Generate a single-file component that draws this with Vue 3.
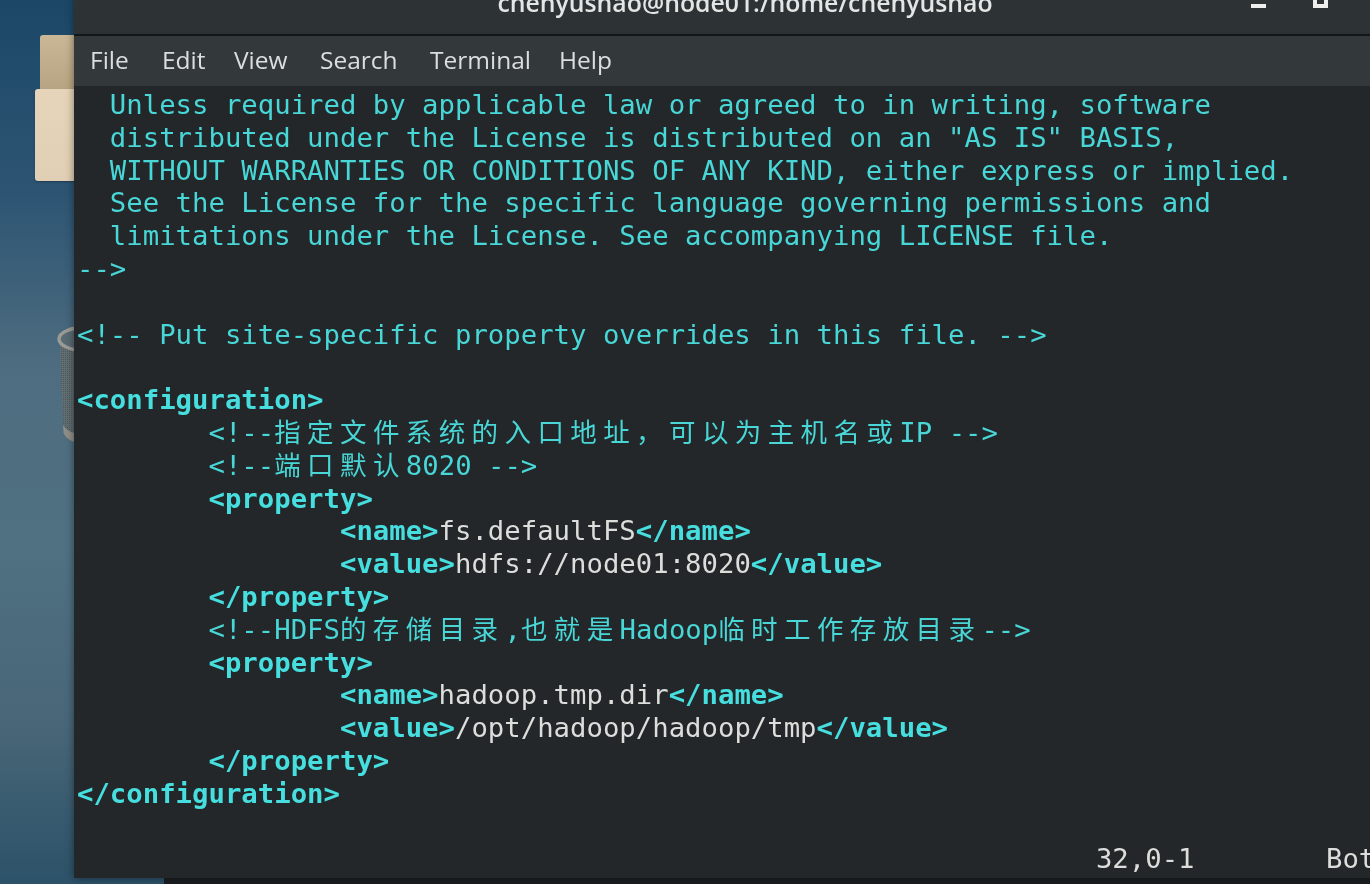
<script setup>
const c = 'c', t = 't', p = 'p'
const raw = [
  [[c, '  Unless required by applicable law or agreed to in writing, software']],
  [[c, '  distributed under the License is distributed on an "AS IS" BASIS,']],
  [[c, '  WITHOUT WARRANTIES OR CONDITIONS OF ANY KIND, either express or implied.']],
  [[c, '  See the License for the specific language governing permissions and']],
  [[c, '  limitations under the License. See accompanying LICENSE file.']],
  [[c, '-->']],
  [],
  [[c, '<!-- Put site-specific property overrides in this file. -->']],
  [],
  [[t, '<configuration>']],
  [[c, '        <!--指定文件系统的入口地址，可以为主机名或IP -->']],
  [[c, '        <!--端口默认8020 -->']],
  [[t, '        <property>']],
  [[t, '                <name>'], [p, 'fs.defaultFS'], [t, '</name>']],
  [[t, '                <value>'], [p, 'hdfs://node01:8020'], [t, '</value>']],
  [[t, '        </property>']],
  [[c, '        <!--HDFS的存储目录,也就是Hadoop临时工作存放目录-->']],
  [[t, '        <property>']],
  [[t, '                <name>'], [p, 'hadoop.tmp.dir'], [t, '</name>']],
  [[t, '                <value>'], [p, '/opt/hadoop/hadoop/tmp'], [t, '</value>']],
  [[t, '        </property>']],
  [[t, '</configuration>']],
  [],
  [[p, '                                                              32,0-1        Bot']]
]
const lines = raw.map(segs => segs.flatMap(([cls, text]) =>
  text.split(/([\u3000-\u9fff\uff00-\uffef]+)/).filter(Boolean).map(s => ({
    cls: /[\u3000-\u9fff\uff00-\uffef]/.test(s) ? cls + ' cjk' : cls,
    text: s
  }))
))
const menus = ['File', 'Edit', 'View', 'Search', 'Terminal', 'Help']
</script>

<template>
  <div class="desktop">
    <div class="folder-back"></div>
    <div class="folder-front"></div>
    <svg class="trash" viewBox="0 0 17 118" width="17" height="118" aria-hidden="true">
      <defs>
        <pattern id="mesh" width="2" height="2" patternUnits="userSpaceOnUse">
          <rect width="2" height="2" fill="#616e72" />
          <rect width="1" height="1" fill="#4c585d" />
        </pattern>
      </defs>
      <path d="M2.5 20 L6.5 108 Q9 114 17 117 L17 20 Z" fill="url(#mesh)" />
      <ellipse cx="30" cy="14" rx="28" ry="12" fill="#586a74" stroke="#9b9b96" stroke-width="3.5" />
      <path d="M6 100 L6.5 108 Q9 114 17 117 L17 108 Q10 106 6 100 Z" fill="#8f8e88" />
    </svg>
    <div class="bottom-strip"></div>

    <div class="window">
      <header class="titlebar">
        <span class="title">chenyushao@node01:/home/chenyushao</span>
        <span class="btn-min"></span>
        <span class="btn-max"></span>
      </header>
      <nav class="menubar">
        <span v-for="m in menus" :key="m" class="menu">{{ m }}</span>
      </nav>
      <div class="terminal">
        <div v-for="(line, i) in lines" :key="i" class="line"><span v-for="(s, j) in line" :key="j" :class="s.cls">{{ s.text }}</span></div>
      </div>
    </div>
  </div>
</template>

<style>
html, body { margin: 0; overflow: hidden; background: #2c5068; }
</style>

<style scoped>
.desktop {
  position: relative;
  width: 1370px;
  height: 884px;
  overflow: hidden;
  background:
    linear-gradient(180deg, #1c4767 0%, #2d5573 22%, #4f6d80 42%, #4f7182 62%, #486677 82%, #2c5269 100%);
}
.folder-back {
  position: absolute;
  left: 40px;
  top: 35px;
  width: 40px;
  height: 60px;
  border-radius: 3px 0 0 0;
  background: linear-gradient(180deg, #c9b796, #b5a280);
}
.folder-front {
  position: absolute;
  left: 35px;
  top: 89px;
  width: 45px;
  height: 92px;
  border-radius: 3px;
  background: linear-gradient(180deg, #e6d5ba, #e0cfb4);
  box-shadow: 0 1px 2px rgba(0, 0, 0, .3);
}
.trash {
  position: absolute;
  left: 57px;
  top: 325px;
}
.bottom-strip {
  position: absolute;
  left: 164px;
  right: 0;
  top: 878px;
  bottom: 0;
  background: #1b1e20;
}
.window {
  position: absolute;
  left: 74px;
  top: -24px;
  width: 1342px;
  height: 902px;
  display: flex;
  flex-direction: column;
  box-shadow: 0 0 8px rgba(0, 0, 0, .45);
  filter: blur(.5px);
}
.titlebar {
  position: relative;
  flex: 0 0 auto;
  height: 53px;
  padding-bottom: 5px;
  display: flex;
  align-items: center;
  justify-content: center;
  background: linear-gradient(180deg, #2f3436, #2c3133);
  border-bottom: 2px solid #14171a;
}
.title {
  font: 600 24.8px/1 "Open Sans", sans-serif;
  color: #e4e6e5;
}
.btn-min {
  position: absolute;
  left: 1177px;
  top: 28px;
  width: 15px;
  height: 4px;
  background: #eeeeec;
}
.btn-max {
  position: absolute;
  left: 1239px;
  top: 16px;
  width: 15px;
  height: 16px;
  box-sizing: border-box;
  border: 4px solid #eeeeec;
}
.menubar {
  flex: 0 0 50px;
  display: grid;
  grid-template-columns: 72px 72px 86px 110px 129px auto;
  align-items: center;
  padding: 0 0 1px 16px;
  box-sizing: border-box;
  background: #33393b;
  color: #dcdedd;
  font: 400 24.5px/1 "Open Sans", sans-serif;
}
.terminal {
  flex: 1;
  overflow: hidden;
  padding: 3px 0 0 3px;
  background: #232729;
  font: 400 27.3px/32.8px "DejaVu Sans Mono", monospace;
}
.line {
  height: 32.8px;
  white-space: pre;
}
.c { color: #48d6d6; }
.t { color: #46dede; font-weight: 700; }
.p { color: #dcdedb; }
.cjk {
  font-family: "Noto Sans CJK SC", sans-serif;
  font-size: 26.5px;
  letter-spacing: 6.4px;
  line-height: 0;
  font-weight: 400;
}
</style>
